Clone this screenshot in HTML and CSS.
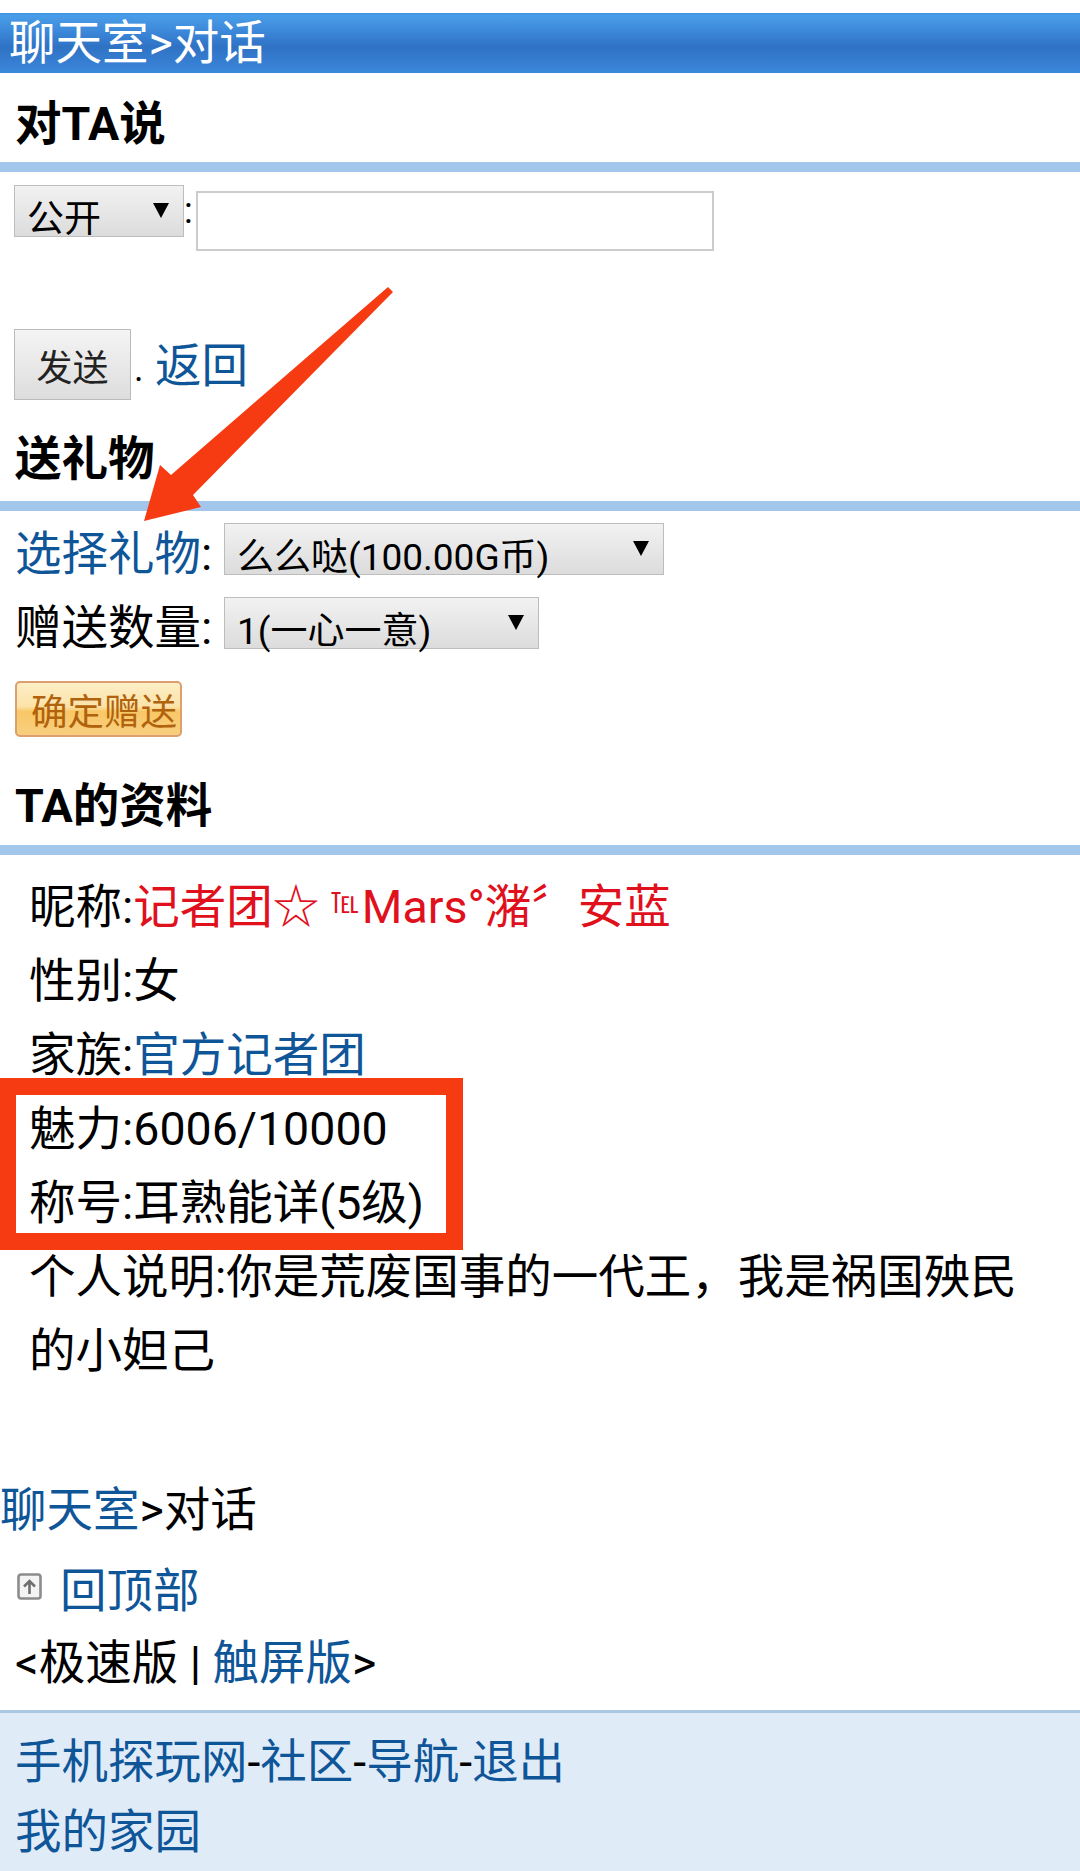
FILE: index.html
```html
<!DOCTYPE html>
<html lang="zh-CN">

<head>
    <meta charset="UTF-8">
    <meta name="viewport" content="width=device-width, initial-scale=1.0">
    <title>聊天室>对话</title>
    <link rel="stylesheet" href="styles.css">
</head>

<body>
    <div class="page">
        <div class="title">聊天室&gt;对话</div>

        <h2 class="heading heading-say">对TA说</h2>
        <form class="say">
            <div class="say-row">
                <span class="select select-target"><span class="select-text">公开</span><i class="caret"></i></span>
                <span class="colon">:</span>
                <input type="text" class="say-input">
            </div>
            <div class="send-row">
                <button type="button" class="btn">发送</button>
                <span class="dot">.</span>
                <a href="#" class="back">返回</a>
            </div>
        </form>

        <h2 class="heading heading-gift">送礼物</h2>
        <form class="gift">
            <div class="gift-row">
                <span class="gift-label"><a href="#">选择礼物</a>:</span>
                <span class="select select-gift"><span class="select-text">么么哒(100.00G币)</span><i class="caret"></i></span>
            </div>
            <div class="gift-row">
                <span class="gift-label">赠送数量:</span>
                <span class="select select-count"><span class="select-text">1(一心一意)</span><i class="caret"></i></span>
            </div>
            <button type="button" class="btn-gift">确定赠送</button>
        </form>

        <h2 class="heading heading-info">TA的资料</h2>
        <div class="info">
            <p>昵称:<span class="nick">记者团☆ <span class="tel">℡</span>Mars°潴〞安蓝</span></p>
            <p>性别:女</p>
            <p>家族:<a href="#">官方记者团</a></p>
            <p>魅力:6006/10000</p>
            <p>称号:耳熟能详(5级)</p>
            <p>个人说明:你是荒废国事的一代王，我是祸国殃民的小妲己</p>
        </div>

        <div class="crumb"><a href="#">聊天室</a>&gt;对话</div>
        <div class="totop">
            <svg class="totop-icon" viewBox="0 0 25 27" width="25" height="27">
                <rect x="1.5" y="1.5" width="22" height="24" rx="2.5" fill="#f4f4f4" stroke="#8c8c8c" stroke-width="2.6" />
                <path d="M12.5 21V8M7 13.5l5.5-5.5 5.5 5.5" fill="none" stroke="#6f6f6f" stroke-width="2.6" />
            </svg>
            <a href="#">回顶部</a>
        </div>
        <div class="version">&lt;极速版 | <a href="#">触屏版</a>&gt;</div>

        <div class="footer">
            <div><a href="#">手机探玩网</a>-<a href="#">社区</a>-<a href="#">导航</a>-<a href="#">退出</a></div>
            <div><a href="#">我的家园</a></div>
        </div>

        <!-- annotations on top of the screenshot -->
        <svg class="arrow" viewBox="0 0 260 250" width="260" height="250">
            <path d="M248 3 L253 8 L53 211 L61 223 L4 237 L20 181 L31 191 Z" fill="#f63b12" />
        </svg>
        <div class="mark"></div>
    </div>
</body>

</html>
```

FILE: styles.css
```css
* {
    box-sizing: border-box;
}

html,
body {
    margin: 0;
    padding: 0;
}

body {
    color: black;
    background-color: white;
    font-family: Roboto, "Noto Sans CJK SC", sans-serif;
    font-size: 46.5px;
}

a {
    color: #0f5699;
    text-decoration: none;
}

.page {
    position: relative;
    height: 1871px;
    padding-top: 13px;
    overflow: hidden;
}

.title {
    height: 60px;
    padding-left: 9px;
    color: white;
    line-height: 56px;
    white-space: nowrap;
    border-top: 2px solid #3f97e6;
    background: linear-gradient(#4a9ee8, #3b86d8 30%, #2f72c4 55%, #3b87dc);
}

.heading {
    margin: 0;
    padding-left: 15px;
    font-size: 46.5px;
    font-weight: bold;
    line-height: 60px;
    border-bottom: 10px solid #a2c6ec;
    display: flex;
    align-items: flex-start;
}

.heading-say {
    height: 99px;
    padding-top: 21px;
}

.heading-gift {
    height: 111px;
    padding-top: 29px;
}

.heading-info {
    height: 118px;
    padding-top: 39px;
}

/* fake selects, the text sits low like on the phone */
.select {
    position: relative;
    display: block;
    height: 52px;
    padding: 17px 0 0 12px;
    font-size: 37px;
    line-height: 34px;
    white-space: nowrap;
    border: 1px solid #bdbdbd;
    background: linear-gradient(#f2f2f2, #dcdcdc);
}

.caret {
    position: absolute;
    top: 17px;
    right: 14px;
    border-top: 15px solid black;
    border-left: 8.5px solid transparent;
    border-right: 8.5px solid transparent;
}

.say {
    padding-left: 14px;
}

.say-row {
    display: flex;
    align-items: flex-start;
    padding-top: 13px;
}

.select-target {
    width: 170px;
}

.colon {
    width: 12px;
    line-height: 52px;
    font-size: 36px;
}

.say-input {
    width: 518px;
    height: 60px;
    margin-top: 6px;
    border: 2px solid #cccccc;
    border-radius: 0;
    background-color: white;
}

.send-row {
    display: flex;
    align-items: flex-end;
    margin-top: 78px;
}

.btn {
    width: 117px;
    height: 71px;
    padding: 0;
    color: #222222;
    font-family: inherit;
    font-size: 36px;
    border: 1px solid #bbbbbb;
    background: linear-gradient(#f4f4f4, #dddddd);
}

.dot {
    width: 24px;
    padding-left: 3px;
    line-height: 62px;
    font-size: 36px;
}

.back {
    line-height: 74px;
    margin-bottom: -3px;
}

.gift {
    padding-left: 15px;
}

.gift-row {
    display: flex;
    align-items: center;
    height: 74px;
}

.gift-row:first-child {
    margin-top: 1px;
}

.gift-label {
    width: 209px;
    white-space: nowrap;
}

.select-gift {
    width: 440px;
}

.select-count {
    width: 315px;
}

.btn-gift {
    display: block;
    width: 167px;
    height: 56px;
    margin-top: 21px;
    padding: 0 0 0 14px;
    color: #b0620c;
    font-family: inherit;
    font-size: 36.5px;
    text-align: left;
    white-space: nowrap;
    border: 2px solid #dca06f;
    border-radius: 5px;
    background: linear-gradient(#fdeec6, #fce3a8 45%, #f9c766 55%, #f8cf80);
}

.info {
    padding: 12px 30px 0 29px;
    height: 618px;
    line-height: 74px;
}

.info p {
    margin: 0;
}

.nick {
    color: #e0101c;
}

.tel {
    margin-right: 3px;
    font-size: 28px;
    vertical-align: 10px;
}

.crumb {
    height: 74px;
    line-height: 74px;
}

.totop {
    display: flex;
    align-items: center;
    gap: 18px;
    height: 79px;
    padding-left: 17px;
}

.totop-icon {
    flex: none;
}

.version {
    height: 74px;
    padding-left: 15px;
    line-height: 74px;
}

.footer {
    height: 175px;
    margin-top: 10px;
    padding: 14px 0 0 15px;
    line-height: 70px;
    border-top: 3px solid #aac8e2;
    background-color: #e0ebf8;
}

.arrow {
    position: absolute;
    top: 284px;
    left: 140px;
    overflow: visible;
}

.mark {
    position: absolute;
    top: 1078px;
    left: -4px;
    width: 467px;
    height: 172px;
    border-style: solid;
    border-color: #f63b12;
    border-width: 17px 17px 17px 20px;
}
```
